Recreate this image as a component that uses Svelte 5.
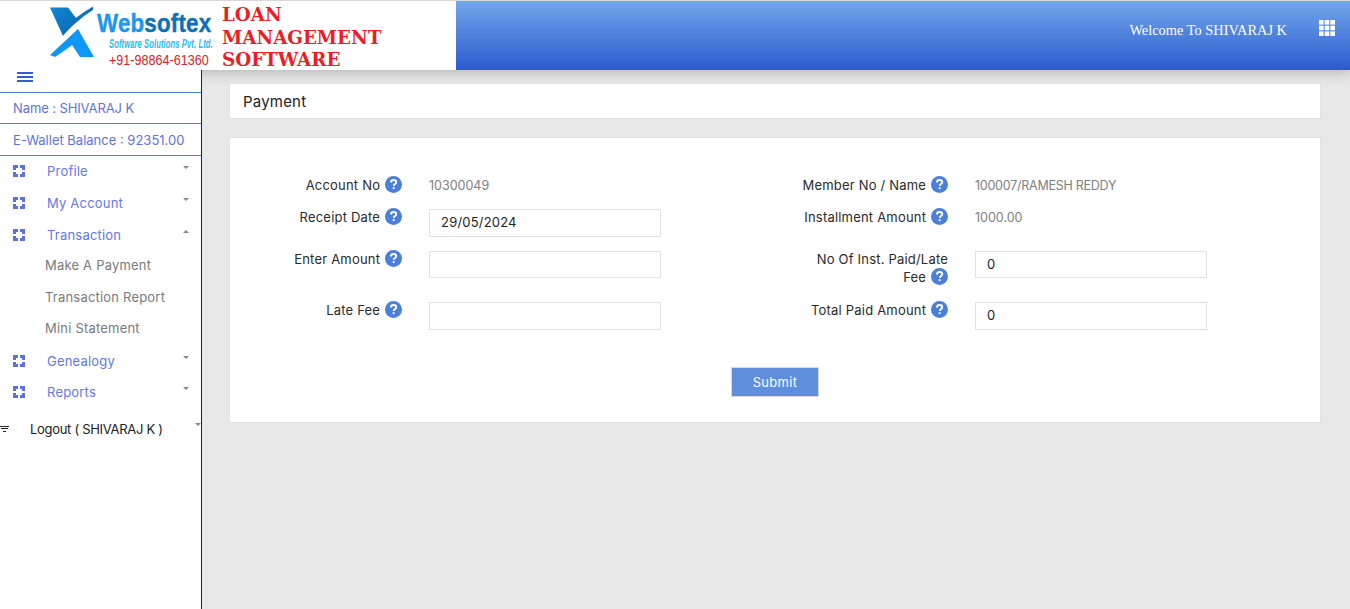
<script>
  const menu = [
    { label: 'Profile' },
    { label: 'My Account' },
    { label: 'Transaction', open: true, children: ['Make A Payment', 'Transaction Report', 'Mini Statement'] },
    { label: 'Genealogy' },
    { label: 'Reports' }
  ];
</script>

{#snippet help()}
  <svg class="help" viewBox="0 0 17 17" aria-hidden="true">
    <circle cx="8.5" cy="8.5" r="8.5" fill="#4a7fdc" />
    <path d="M5.9 6.5c0-1.6 1.2-2.5 2.7-2.5s2.6.9 2.6 2.2c0 1.9-2.4 1.9-2.4 3.7" fill="none" stroke="#fff" stroke-width="1.9" />
    <rect x="7.7" y="11.2" width="1.9" height="1.9" fill="#fff" />
  </svg>
{/snippet}

<div class="page">
  <header class="topbar">
    <div class="brand">
      <svg class="logo" viewBox="0 0 220 69" aria-label="Websoftex">
        <defs>
          <linearGradient id="mark" x1="0" y1="0" x2="1" y2="1">
            <stop offset="0" stop-color="#0f86d4" />
            <stop offset="1" stop-color="#0a62a8" />
          </linearGradient>
        </defs>
        <path d="M50 7.5H68L76 18C81 14 87 10 93 6.5V10C82 17 71 26 63 36Z" fill="url(#mark)" />
        <path d="M78 29L94 57H80L72 45C67 49 61 53 55 57L50 55Z" fill="#0e97f5" />
        <text class="web" transform="translate(97 32) scale(.895 1)">Web<tspan class="softex">softex</tspan></text>
        <text class="soft" transform="translate(109 48) scale(.63 1)">Software Solutions Pvt. Ltd.</text>
        <text class="phone" transform="translate(109 65) scale(.9 1)">+91-98864-61360</text>
      </svg>
      <div class="product">LOAN<br />MANAGEMENT<br />SOFTWARE</div>
    </div>
    <div class="welcome">Welcome To SHIVARAJ K</div>
    <svg class="apps" viewBox="0 0 16 16" aria-hidden="true">
      {#each [0, 5.7, 11.4] as y}
        {#each [0, 5.7, 11.4] as x}
          <rect {x} {y} width="4.6" height="4.6" fill="#fff" />
        {/each}
      {/each}
    </svg>
  </header>

  <div class="body">
    <aside class="sidebar">
      <div class="burger"><span></span><span></span><span></span></div>
      <div class="info name">Name : SHIVARAJ K</div>
      <div class="info wallet">E-Wallet Balance : 92351.00</div>
      <nav>
        {#each menu as item}
          <div class="item">
            <svg class="node" viewBox="0 0 12 12" aria-hidden="true">
              <path d="M0 0H5V3H3V5H0Z M7 0H12V5H9V3H7Z M0 7H3V9H5V12H0Z M12 7H9V9H7V12H12Z" fill="#5c72dc" />
            </svg>
            <span class="item-label">{item.label}</span>
            <i class="caret" class:up={item.open}></i>
          </div>
          {#if item.children}
            <div class="sub">
              {#each item.children as child}
                <div class="sub-item">{child}</div>
              {/each}
            </div>
          {/if}
        {/each}
      </nav>
      <div class="logout">
        <span class="filter"><b></b><b></b><b></b></span>
        <span>Logout ( SHIVARAJ K )</span>
        <i class="caret end"></i>
      </div>
    </aside>

    <main class="content">
      <div class="card title">Payment</div>
      <div class="card form">
        <div class="grid">
          <div class="field">
            <div class="label">Account No {@render help()}</div>
            <div class="value">10300049</div>
          </div>
          <div class="field">
            <div class="label">Member No / Name {@render help()}</div>
            <div class="value tight">100007/RAMESH REDDY</div>
          </div>

          <div class="field r2">
            <div class="label">Receipt Date {@render help()}</div>
            <input class="input" value="29/05/2024" />
          </div>
          <div class="field r2">
            <div class="label">Installment Amount {@render help()}</div>
            <div class="value">1000.00</div>
          </div>

          <div class="field r3">
            <div class="label">Enter Amount {@render help()}</div>
            <input class="input short" />
          </div>
          <div class="field r3">
            <div class="label">No Of Inst. Paid/Late Fee {@render help()}</div>
            <input class="input short" value="0" />
          </div>

          <div class="field">
            <div class="label">Late Fee {@render help()}</div>
            <input class="input" />
          </div>
          <div class="field">
            <div class="label">Total Paid Amount {@render help()}</div>
            <input class="input" value="0" />
          </div>
        </div>
        <div class="actions"><button class="submit">Submit</button></div>
      </div>
    </main>
  </div>
</div>

<style>
  :global(body) {
    margin: 0;
    background: #e8e8e8;
  }
  .page {
    height: 609px;
    overflow: hidden;
    display: flex;
    flex-direction: column;
    font-family: Inter, "Open Sans", sans-serif;
    font-size: 13px;
    letter-spacing: 0.2px;
  }
  .topbar {
    position: relative;
    z-index: 2;
    height: 69px;
    flex: none;
    border-top: 1px solid #d8d8d8;
    display: flex;
    align-items: flex-start;
    background: linear-gradient(#74a6ea, #2a5bcf);
    box-shadow: 0 3px 12px rgba(0, 0, 0, 0.22);
    color: #fff;
  }
  .brand {
    width: 456px;
    height: 69px;
    background: #fff;
    display: flex;
  }
  .logo {
    width: 220px;
    height: 69px;
    margin-top: -1px;
    flex: none;
  }
  .web {
    font: bold 25px "Liberation Sans", sans-serif;
    fill: #1c96ee;
    stroke: #1c96ee;
    stroke-width: 0.4;
  }
  .softex {
    fill: #0f6fb8;
    stroke: #0f6fb8;
  }
  .soft {
    font: italic bold 12px "Liberation Sans", sans-serif;
    fill: #2cb8f0;
  }
  .phone {
    font: 14px "Liberation Sans", sans-serif;
    fill: #d8232a;
    letter-spacing: 0;
  }
  .product {
    margin: 3px 0 0 2px;
    font: bold 18.3px/22.5px "DejaVu Serif", serif;
    color: #ee1c25;
    letter-spacing: 0;
  }
  .welcome {
    margin: 20px 0 0 auto;
    font: 14.4px/18px "Liberation Serif", serif;
    letter-spacing: 0;
  }
  .apps {
    width: 16px;
    height: 16px;
    margin: 19px 15px 0 32px;
  }
  .body {
    flex: 1;
    display: flex;
    min-height: 0;
  }
  .sidebar {
    position: relative;
    z-index: 3;
    width: 201px;
    flex: none;
    background: #fff;
    border-right: 1px solid #222;
  }
  .burger {
    height: 23px;
    padding: 2px 0 0 17px;
    box-sizing: border-box;
    display: flex;
    flex-direction: column;
    gap: 2.5px;
    border-bottom: 1px solid #4a7fdc;
  }
  .burger span {
    width: 16px;
    height: 1.5px;
    background: #2f5fd0;
  }
  .info {
    padding-left: 13px;
    color: #5f74d8;
    border-bottom: 1px solid #4a7fdc;
    display: flex;
    align-items: center;
    letter-spacing: 0;
  }
  .name {
    height: 30px;
    letter-spacing: -0.1px;
  }
  .wallet {
    height: 31px;
  }
  .item {
    height: 32px;
    display: flex;
    align-items: flex-start;
    color: #6478e6;
    position: relative;
  }
  .item:nth-last-child(2) {
    height: 31px;
  }
  .node {
    width: 12px;
    height: 12px;
    margin: 9px 0 0 13px;
  }
  .item-label {
    margin: 7px 0 0 22px;
    line-height: 16px;
  }
  .caret {
    position: absolute;
    right: 12px;
    top: 10px;
    width: 0;
    height: 0;
    border: 3.5px solid transparent;
    border-top-color: #888;
    border-bottom: 0;
  }
  .caret.up {
    border-top: 0;
    border-bottom: 3.5px solid #888;
  }
  .sub {
    margin-top: -1px;
  }
  .sub-item {
    height: 31.5px;
    padding: 6px 0 0 45px;
    box-sizing: border-box;
    color: #7a7a7a;
    line-height: 16px;
  }
  .logout {
    margin-top: 5px;
    height: 30px;
    display: flex;
    align-items: center;
    position: relative;
    color: #222;
    letter-spacing: -0.3px;
  }
  .filter {
    width: 30px;
    flex: none;
    display: flex;
    flex-direction: column;
    gap: 1.5px;
  }
  .filter b {
    height: 1px;
    background: #222;
    width: 9px;
  }
  .filter b:nth-child(2) {
    width: 7px;
    margin-left: 1px;
  }
  .filter b:nth-child(3) {
    width: 3px;
    margin-left: 3px;
  }
  .caret.end {
    right: 0;
    top: 9px;
  }
  .content {
    flex: 1;
    padding: 13px 29px 0 27px;
    min-width: 0;
  }
  .card {
    background: #fff;
    border: 1px solid #e2e2e2;
    box-sizing: border-box;
  }
  .title {
    height: 36px;
    padding: 0 13px;
    display: flex;
    align-items: center;
    font-size: 15px;
    color: #222;
    margin-bottom: 18px;
  }
  .form {
    height: 286px;
    padding: 37px 0 0 20px;
  }
  .grid {
    display: grid;
    grid-template-columns: 546px 514px;
    grid-template-rows: 22px 40px 65px 28px;
  }
  .field {
    display: grid;
    grid-template-columns: 152px 232px;
    column-gap: 27px;
    align-items: start;
  }
  .r2 {
    margin-top: 12px;
  }
  .r3 {
    margin-top: 14px;
  }
  .label {
    text-align: right;
    color: #2b2b2b;
    line-height: 18px;
    margin-top: -1px;
  }
  .field:nth-child(-n + 2) .label {
    margin-top: 1px;
  }
  .help {
    width: 17px;
    height: 17px;
    vertical-align: -3px;
    margin-left: 1px;
  }
  .value {
    color: #808080;
    line-height: 18px;
    font-size: 12.5px;
    letter-spacing: 0;
    margin-top: 0;
  }
  .field:nth-child(-n + 2) .value {
    margin-top: 2px;
  }
  .tight {
    letter-spacing: -0.25px;
  }
  .input {
    width: 232px;
    height: 28px;
    box-sizing: border-box;
    border: 1px solid #e2e2e2;
    padding: 0 11px 2px;
    font: inherit;
    letter-spacing: inherit;
    color: #222;
    outline: none;
    background: #fff;
    margin: 0;
  }
  .short {
    height: 27px;
  }
  .actions {
    display: flex;
    justify-content: center;
    margin: 37px 0 0 -20px;
  }
  .submit {
    width: 88px;
    height: 30px;
    box-sizing: border-box;
    border: 1px solid #d5d9e2;
    padding: 0 0 1px;
    background: #5f8fdc;
    color: #fff;
    font: inherit;
    letter-spacing: 0.3px;
  }
</style>
